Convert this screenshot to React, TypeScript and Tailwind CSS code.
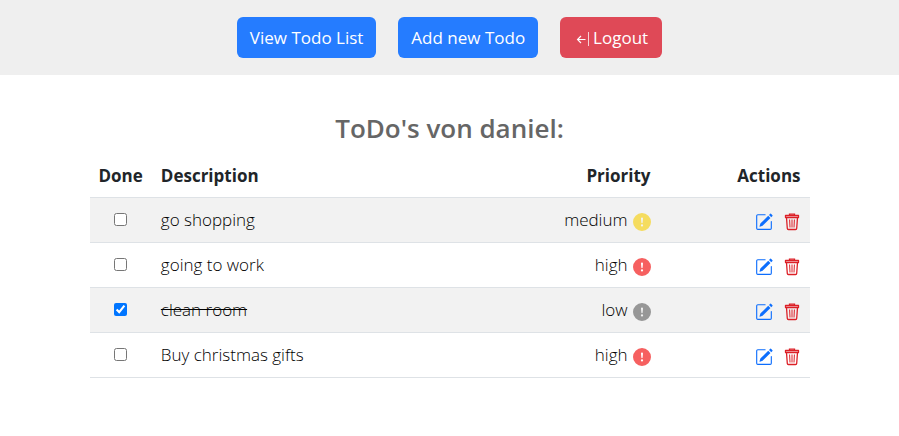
import { useState } from "react";
import { BsExclamationCircleFill, BsPencilSquare } from "react-icons/bs";

type Priority = "low" | "medium" | "high";

interface Todo {
  id: number;
  description: string;
  priority: Priority;
  done: boolean;
}

const initialTodos: Todo[] = [
  { id: 1, description: "go shopping", priority: "medium", done: false },
  { id: 2, description: "going to work", priority: "high", done: false },
  { id: 3, description: "clean room", priority: "low", done: true },
  { id: 4, description: "Buy christmas gifts", priority: "high", done: false },
];

const priorityColor: Record<Priority, string> = {
  low: "text-[#979797]",
  medium: "text-[#f5dc5f]",
  high: "text-[#f66060]",
};

function LogoutIcon() {
  return (
    <svg width="18" height="18" viewBox="0 0 18 18" fill="none" stroke="currentColor" aria-hidden="true">
      <path d="M11.5 10.5H3.5M7 7L3.5 10.5L7 14" strokeWidth="1.1" />
      <path d="M14.5 3V17" strokeWidth="1" strokeOpacity="0.75" />
    </svg>
  );
}

function TrashIcon() {
  return (
    <svg width="16" height="18" viewBox="0 0 16 18" fill="none" stroke="currentColor" aria-hidden="true">
      <path d="M5.5 2.5V1.2H10.5V2.5" strokeWidth="1.3" />
      <path d="M1.5 2.5H14.5V4.5H1.5Z" strokeWidth="1.3" strokeLinejoin="round" />
      <path d="M2.5 4.5L3.3 15.5Q3.4 16.5 4.4 16.5H11.6Q12.6 16.5 12.7 15.5L13.5 4.5" strokeWidth="1.3" />
      <path d="M5.6 6.5L6 14.5M8 6.5V14.5M10.4 6.5L10 14.5" strokeWidth="1" />
    </svg>
  );
}

function TodoRow({ todo, onToggle }: { todo: Todo; onToggle: () => void }) {
  return (
    <tr className="h-[45px] border-b border-[#dee2e6] odd:bg-[#f2f2f2]">
      <td className="px-[9px] text-center">
        <input
          type="checkbox"
          aria-label={`Done: ${todo.description}`}
          checked={todo.done}
          onChange={onToggle}
          className="mb-1 size-[13px] align-middle accent-[#0075ff]"
        />
      </td>
      <td className={todo.done ? "px-[9px] line-through" : "px-[9px]"}>{todo.description}</td>
      <td className="px-[9px]">
        <div className="flex items-center justify-end gap-[5px]">
          {todo.priority}
          <BsExclamationCircleFill className={`mt-1 size-[18px] ${priorityColor[todo.priority]}`} />
        </div>
      </td>
      <td className="pr-2.5 pl-[9px]">
        <div className="flex items-center justify-end gap-[11px] pt-1">
          <button type="button" aria-label="Edit" className="text-[#0d6efd]">
            <BsPencilSquare className="size-[18px]" />
          </button>
          <button type="button" aria-label="Delete" className="text-[#dc1f26]">
            <TrashIcon />
          </button>
        </div>
      </td>
    </tr>
  );
}

export default function App() {
  const [todos, setTodos] = useState(initialTodos);

  const toggle = (id: number) =>
    setTodos((list) => list.map((t) => (t.id === id ? { ...t, done: !t.done } : t)));

  return (
    <div className="font-['Segoe_UI','Open_Sans',sans-serif] text-[17px] leading-[27px] text-[#212529]">
      <nav className="flex justify-center gap-[22px] bg-[#efefef] py-[17px] text-white">
        <button type="button" className="h-[41px] rounded-md bg-[#257cff] px-[13px]">
          View Todo List
        </button>
        <button type="button" className="h-[41px] rounded-md bg-[#257cff] px-[13px]">
          Add new Todo
        </button>
        <button type="button" className="flex h-[41px] items-center gap-px rounded-md bg-[#df4957] px-3.5">
          <LogoutIcon />
          Logout
        </button>
      </nav>
      <main className="mx-auto max-w-[720px] pt-[35px]">
        <h1 className="text-center text-[26px] leading-9 font-semibold text-[#666]">ToDo's von daniel:</h1>
        <table className="mt-2 w-full border-collapse">
          <thead>
            <tr className="h-[43px] border-b border-[#dee2e6] font-bold">
              <th className="w-[61px] px-[9px] text-center">Done</th>
              <th className="px-[9px] text-left">Description</th>
              <th className="px-[9px] text-right">Priority</th>
              <th className="w-[150px] px-[9px] text-right">Actions</th>
            </tr>
          </thead>
          <tbody className="font-light text-black">
            {todos.map((todo) => (
              <TodoRow key={todo.id} todo={todo} onToggle={() => toggle(todo.id)} />
            ))}
          </tbody>
        </table>
      </main>
    </div>
  );
}
